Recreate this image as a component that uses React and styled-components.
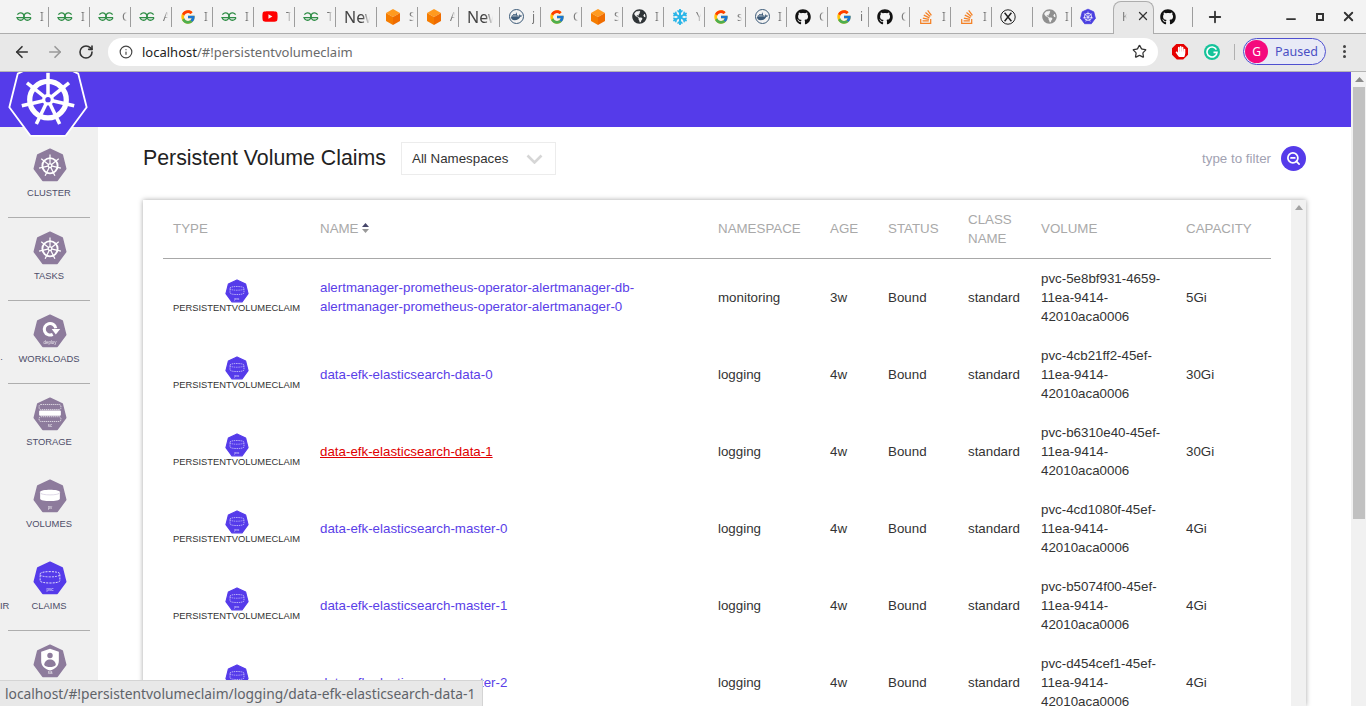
import React from "react";
import styled, { createGlobalStyle } from "styled-components";
import { ArrowLeft, ArrowRight, RotateCw, Info, Star, X, Plus, Minus, ZoomOut } from "lucide-react";
import { FaGithub, FaStackOverflow, FaYoutube, FaDocker, FaSnowflake, FaGlobeAmericas, FaHandPaper } from "react-icons/fa";
import { FcGoogle } from "react-icons/fc";

const PURPLE = "#553bea";
const GREY_HEX = "#8d7b9c";
const HEPTAGON = "50,4 86,21 96,61 71,95 29,95 4,61 14,21";

const GlobalStyle = createGlobalStyle`
  html, body {
    margin: 0;
    height: 100%;
    overflow: hidden;
    background: #fff;
    font-family: "Liberation Sans", Arial, sans-serif;
  }
`;

const Gfg = () => (
  <svg width="16" height="16" viewBox="0 0 16 16" fill="none" stroke="#2f8d46" strokeWidth="1.3">
    <path d="M1.4 5.6A3.7 3.7 0 1 1 1 8.6h14" />
    <path d="M14.6 5.6A3.7 3.7 0 1 0 15 8.6" />
  </svg>
);

const Cube = () => (
  <svg width="16" height="18" viewBox="0 0 16 18">
    <polygon points="8,1 15,5 8,9 1,5" fill="#ff9a1f" />
    <polygon points="1,5 8,9 8,17 1,13" fill="#f57c00" />
    <polygon points="15,5 8,9 8,17 15,13" fill="#ef6c00" />
  </svg>
);

const DockerBadge = () => (
  <DockerRing>
    <FaDocker size={11} color="#3c5a78" />
  </DockerRing>
);

const CrossBadge = () => (
  <svg width="16" height="16" viewBox="0 0 16 16" fill="none" stroke="#222" strokeWidth="1">
    <circle cx="8" cy="8" r="7.2" />
    <path d="M4.6 3.8l6.8 8.4M11.4 3.8l-6.8 8.4" strokeWidth="1.5" />
  </svg>
);

// steering wheel, centred on 50,52 in the heptagon's own box
const Wheel = ({ r = 24, width = 3, hub = PURPLE }) => {
  const spokes = [0, 1, 2, 3, 4, 5, 6].map((i) => (i * 360) / 7);
  return (
    <g stroke="#fff" fill="none">
      <circle cx="50" cy="52" r={r * 0.68} strokeWidth={width * 1.5} />
      {spokes.map((a) => (
        <line key={a} x1="50" y1="52" x2="50" y2={52 - r} strokeWidth={width} transform={`rotate(${a} 50 52)`} />
      ))}
      <circle cx="50" cy="52" r={r * 0.22} fill="#fff" stroke="none" />
      <circle cx="50" cy="52" r={r * 0.1} fill={hub} stroke="none" />
    </g>
  );
};

const K8sIcon = ({ size = 34, color = GREY_HEX }) => (
  <svg width={size} height={size} viewBox="0 0 100 100">
    <polygon points={HEPTAGON} fill={color} stroke={color} strokeWidth="5" strokeLinejoin="round" />
    <Wheel r={33} width={3.6} hub={color} />
  </svg>
);

const Tag = ({ children }) => (
  <text x="50" y="89" textAnchor="middle" fontSize="13" fill="#fff" fontFamily="Liberation Sans, sans-serif" opacity="0.85">
    {children}
  </text>
);

const Drum = ({ dashed }) => (
  <g fill="none" stroke="#fff" strokeWidth={dashed ? 2.4 : 0} strokeDasharray={dashed ? "6 3" : undefined}>
    <path d="M21 38c0-9 58-9 58 0v20c0 9-58 9-58 0z" fill={dashed ? "none" : "#fff"} />
    <path d="M21 40c0 9 58 9 58 0" stroke={dashed ? "#fff" : "#cfc6da"} strokeWidth="2" />
  </g>
);

const VolumeIcon = ({ size = 34, color = GREY_HEX, dashed, tag }) => (
  <svg width={size} height={size} viewBox="0 0 100 100">
    <polygon points={HEPTAGON} fill={color} stroke={color} strokeWidth="5" strokeLinejoin="round" />
    <Drum dashed={dashed} />
    <Tag>{tag}</Tag>
  </svg>
);

const WorkloadIcon = () => (
  <svg width="34" height="34" viewBox="0 0 100 100">
    <polygon points={HEPTAGON} fill={GREY_HEX} stroke={GREY_HEX} strokeWidth="5" strokeLinejoin="round" />
    <path d="M58 60A17 17 0 1 1 67 42" fill="none" stroke="#fff" strokeWidth="9" />
    <polygon points="55,44 80,44 67,60" fill="#fff" />
    <Tag>deploy</Tag>
  </svg>
);

const StorageIcon = () => (
  <svg width="34" height="34" viewBox="0 0 100 100">
    <polygon points={HEPTAGON} fill={GREY_HEX} stroke={GREY_HEX} strokeWidth="5" strokeLinejoin="round" />
    <rect x="18" y="22" width="64" height="15" rx="5" fill="none" stroke="#fff" strokeWidth="2" strokeDasharray="4 2" />
    <rect x="18" y="40" width="64" height="15" rx="3" fill="#fff" />
    <rect x="18" y="58" width="64" height="14" rx="5" fill="none" stroke="#fff" strokeWidth="2" strokeDasharray="4 2" />
    <Tag>sc</Tag>
  </svg>
);

const AccountIcon = () => (
  <svg width="34" height="34" viewBox="0 0 100 100">
    <polygon points={HEPTAGON} fill={GREY_HEX} stroke={GREY_HEX} strokeWidth="5" strokeLinejoin="round" />
    <path d="M50 14l26 9v26c0 16-12 25-26 29-14-4-26-13-26-29V23z" fill="#fff" />
    <circle cx="50" cy="34" r="8" fill={GREY_HEX} />
    <path d="M33 62c0-22 34-22 34 0-6 8-28 8-34 0z" fill={GREY_HEX} />
    <Tag>sa</Tag>
  </svg>
);

const TABS = [
  { icon: <Gfg />, label: "I" },
  { icon: <Gfg />, label: "I" },
  { icon: <Gfg />, label: "G" },
  { icon: <Gfg />, label: "A" },
  { icon: <FcGoogle size={16} />, label: "I" },
  { icon: <Gfg />, label: "I" },
  { icon: <FaYoutube size={17} color="#f00" />, label: "T" },
  { icon: <Gfg />, label: "T" },
  { text: "New" },
  { icon: <Cube />, label: "S" },
  { icon: <Cube />, label: "A" },
  { text: "New" },
  { icon: <DockerBadge />, label: "j" },
  { icon: <FcGoogle size={16} />, label: "G" },
  { icon: <Cube />, label: "S" },
  { icon: <FaGlobeAmericas size={15} color="#2f3437" />, label: "I" },
  { icon: <FaSnowflake size={16} color="#29b5e8" />, label: "Y" },
  { icon: <FcGoogle size={16} />, label: "s" },
  { icon: <DockerBadge />, label: "I" },
  { icon: <FaGithub size={16} color="#111" />, label: "G" },
  { icon: <FcGoogle size={16} />, label: "i" },
  { icon: <FaGithub size={16} color="#111" />, label: "G" },
  { icon: <FaStackOverflow size={16} color="#f48024" />, label: "I" },
  { icon: <FaStackOverflow size={16} color="#f48024" />, label: "I" },
  { icon: <CrossBadge /> },
  { icon: <FaGlobeAmericas size={15} color="#8f8f8f" />, label: "I", narrow: true },
  { icon: <K8sIcon size={17} color="#4a3fe0" />, last: true },
];

const NAV = [
  { label: "CLUSTER", icon: <K8sIcon />, line: true },
  { label: "TASKS", icon: <K8sIcon />, line: true },
  { label: "WORKLOADS", icon: <WorkloadIcon />, line: true, stray: "·" },
  { label: "STORAGE", icon: <StorageIcon />, short: true },
  { label: "VOLUMES", icon: <VolumeIcon tag="pv" />, short: true },
  { label: "CLAIMS", icon: <VolumeIcon tag="pvc" color={PURPLE} dashed />, line: true, stray: "IR" },
  { label: "ACCOUNTS", icon: <AccountIcon /> },
];

const ROWS = [
  { name: "alertmanager-prometheus-operator-alertmanager-db-alertmanager-prometheus-operator-alertmanager-0", ns: "monitoring", age: "3w", volume: "pvc-5e8bf931-4659-11ea-9414-42010aca0006", cap: "5Gi" },
  { name: "data-efk-elasticsearch-data-0", ns: "logging", age: "4w", volume: "pvc-4cb21ff2-45ef-11ea-9414-42010aca0006", cap: "30Gi" },
  { name: "data-efk-elasticsearch-data-1", ns: "logging", age: "4w", volume: "pvc-b6310e40-45ef-11ea-9414-42010aca0006", cap: "30Gi", hover: true },
  { name: "data-efk-elasticsearch-master-0", ns: "logging", age: "4w", volume: "pvc-4cd1080f-45ef-11ea-9414-42010aca0006", cap: "4Gi" },
  { name: "data-efk-elasticsearch-master-1", ns: "logging", age: "4w", volume: "pvc-b5074f00-45ef-11ea-9414-42010aca0006", cap: "4Gi" },
  { name: "data-efk-elasticsearch-master-2", ns: "logging", age: "4w", volume: "pvc-d454cef1-45ef-11ea-9414-42010aca0006", cap: "4Gi" },
];

const App = () => {
  return (
    <Browser>
      <GlobalStyle />
      <TabStrip>
        {TABS.map((t, i) => (
          <Tab key={i} $narrow={t.narrow} $last={t.last}>
            {t.text ? (
              <TabText>{t.text}</TabText>
            ) : (
              <>
                <TabIcon>{t.icon}</TabIcon>
                {t.label && <TabLabel>{t.label}</TabLabel>}
              </>
            )}
          </Tab>
        ))}
        <ActiveTab>
          <TabLabel>K</TabLabel>
          <X size={14} color="#333" strokeWidth={2.2} />
        </ActiveTab>
        <GithubTab>
          <TabIcon>
            <FaGithub size={16} color="#111" />
          </TabIcon>
        </GithubTab>
        <NewTab>
          <Plus size={18} strokeWidth={2.4} color="#333" />
        </NewTab>
        <WindowControls>
          <MinimizeIcon size={14} strokeWidth={3} color="#333" />
          <MaxBox />
          <X size={15} strokeWidth={3} color="#333" />
        </WindowControls>
      </TabStrip>

      <Toolbar>
        <NavButtons>
          <ArrowLeft size={18} strokeWidth={2.2} color="#333" />
          <ArrowRight size={18} strokeWidth={2.2} color="#999" />
          <RotateCw size={16} strokeWidth={2.4} color="#333" />
        </NavButtons>
        <Omnibox>
          <Info size={14} color="#444" strokeWidth={2} />
          <Url>
            localhost<UrlRest>/#!persistentvolumeclaim</UrlRest>
          </Url>
          <Star size={15} color="#333" strokeWidth={2} />
        </Omnibox>
        <AdBlock>
          <FaHandPaper size={11} color="#fff" />
        </AdBlock>
        <Grammarly>
          <svg width="12" height="12" viewBox="0 0 12 12" fill="none" stroke="#fff" strokeWidth="1.6">
            <path d="M10.4 3.6A5 5 0 1 0 11 6.4H7.5" />
          </svg>
        </Grammarly>
        <ToolbarDivider />
        <Profile>
          <Avatar>G</Avatar>
          Paused
        </Profile>
        <Kebab>
          <i />
          <i />
          <i />
        </Kebab>
      </Toolbar>

      <Viewport>
        <Page>
          <Banner>
            <Logo>
              <svg width="84" height="84" viewBox="0 0 100 100">
                <polygon points={HEPTAGON} fill={PURPLE} stroke="#fff" strokeWidth="2.2" strokeLinejoin="round" />
                <Wheel r={32} width={4.2} />
              </svg>
            </Logo>
          </Banner>
          <Content>
            <Sidebar>
              {NAV.map((n) => (
                <NavItem key={n.label} $line={n.line} $short={n.short}>
                  {n.stray && <Stray>{n.stray}</Stray>}
                  {n.icon}
                  <NavLabel>{n.label}</NavLabel>
                </NavItem>
              ))}
            </Sidebar>
            <Main>
              <TitleRow>
                <Title>Persistent Volume Claims</Title>
                <Select>
                  All Namespaces
                  <svg width="17" height="10" viewBox="0 0 17 10" fill="none" stroke="#d6d6d6" strokeWidth="2.6">
                    <path d="M1.5 1.5l7 7 7-7" />
                  </svg>
                </Select>
                <Filter>
                  type to filter
                  <SearchButton>
                    <ZoomOut size={15} color="#fff" strokeWidth={2.8} />
                  </SearchButton>
                </Filter>
              </TitleRow>
              <Card>
                <TableWrap>
                  <Table>
                    <colgroup>
                      <col width="147" />
                      <col width="398" />
                      <col width="112" />
                      <col width="58" />
                      <col width="80" />
                      <col width="73" />
                      <col width="145" />
                      <col width="95" />
                    </colgroup>
                    <thead>
                      <tr>
                        <th><HeadLabel>TYPE</HeadLabel></th>
                        <th>
                          <HeadLabel>
                            NAME
                            <SortCaret width="7" height="10" viewBox="0 0 7 10">
                              <polygon points="3.5,0 7,4 0,4" fill="#45456a" />
                              <polygon points="3.5,10 7,6 0,6" fill="#999" />
                            </SortCaret>
                          </HeadLabel>
                        </th>
                        <th><HeadLabel>NAMESPACE</HeadLabel></th>
                        <th><HeadLabel>AGE</HeadLabel></th>
                        <th><HeadLabel>STATUS</HeadLabel></th>
                        <th>CLASS NAME</th>
                        <th><HeadLabel>VOLUME</HeadLabel></th>
                        <th><HeadLabel>CAPACITY</HeadLabel></th>
                      </tr>
                    </thead>
                    <tbody>
                      {ROWS.map((r) => (
                        <tr key={r.name}>
                          <td>
                            <TypeCell>
                              <VolumeIcon size={24} color={PURPLE} dashed tag="pvc" />
                              <TypeLabel>PERSISTENTVOLUMECLAIM</TypeLabel>
                            </TypeCell>
                          </td>
                          <td>
                            <NameLink $hover={r.hover}>{r.name}</NameLink>
                          </td>
                          <td>{r.ns}</td>
                          <td>{r.age}</td>
                          <td>Bound</td>
                          <td>standard</td>
                          <td>{r.volume}</td>
                          <td>{r.cap}</td>
                        </tr>
                      ))}
                    </tbody>
                  </Table>
                </TableWrap>
                <CardScroll>
                  <svg width="8" height="5" viewBox="0 0 8 5">
                    <polygon points="4,0 8,5 0,5" fill="#a3a3a3" />
                  </svg>
                </CardScroll>
              </Card>
            </Main>
          </Content>
        </Page>
        <PageScroll>
          <svg width="9" height="5" viewBox="0 0 9 5">
            <polygon points="4.5,0 9,5 0,5" fill="#8a8a8a" />
          </svg>
          <PageThumb />
        </PageScroll>
        <StatusBubble>localhost/#!persistentvolumeclaim/logging/data-efk-elasticsearch-data-1</StatusBubble>
      </Viewport>
    </Browser>
  );
};

const Browser = styled.div`
  width: 1366px;
  height: 706px;
  display: flex;
  flex-direction: column;
  overflow: hidden;
`;

const TabStrip = styled.div`
  height: 34px;
  box-sizing: border-box;
  flex: none;
  display: flex;
  align-items: center;
  padding-left: 8px;
  background: #f3f3f3;
  border-bottom: 1px solid #adadad;
`;

const Tab = styled.div`
  width: ${(p) => (p.$narrow ? 39 : 41)}px;
  height: 20px;
  flex: none;
  box-sizing: border-box;
  display: flex;
  align-items: center;
  gap: 8px;
  padding-left: 8px;
  overflow: hidden;
  border-right: ${(p) => (p.$last ? "none" : "1px solid #9d9d9d")};
`;

const GithubTab = styled(Tab)`
  width: 39px;
  padding-left: 6px;
`;

const TabIcon = styled.span`
  width: 16px;
  height: 18px;
  flex: none;
  display: flex;
  align-items: center;
  justify-content: center;
`;

const TabLabel = styled.span`
  font-family: "Noto Sans", sans-serif;
  font-size: 12px;
  color: #777;
  width: 5px;
  overflow: hidden;
  -webkit-mask-image: linear-gradient(to right, #000 30%, transparent);
`;

const TabText = styled.span`
  font-family: "Noto Sans", sans-serif;
  font-size: 16px;
  color: #444;
  width: 26px;
  overflow: hidden;
  -webkit-mask-image: linear-gradient(to right, #000 70%, transparent);
`;

const ActiveTab = styled.div`
  width: 41px;
  height: 33px;
  margin-top: 1px;
  margin-bottom: -1px;
  flex: none;
  box-sizing: border-box;
  display: flex;
  align-items: center;
  gap: 9px;
  padding: 0 0 4px 8px;
  background: #e8e8e8;
  border: 1px solid #adadad;
  border-bottom: none;
  border-radius: 8px 8px 0 0;
`;

const NewTab = styled.div`
  width: 44px;
  flex: none;
  display: flex;
  justify-content: center;
`;

const WindowControls = styled.div`
  margin-left: auto;
  width: 72px;
  margin-right: 10px;
  display: flex;
  align-items: center;
  justify-content: space-between;
`;

const MinimizeIcon = styled(Minus)`
  margin-top: 5px;
`;

const MaxBox = styled.span`
  width: 8px;
  height: 8px;
  box-sizing: border-box;
  border: 2px solid #333;
`;

const Toolbar = styled.div`
  height: 38px;
  flex: none;
  box-sizing: border-box;
  display: flex;
  align-items: center;
  background: #e8e8e8;
  border-bottom: 1px solid #b4b4b4;
  padding-bottom: 2px;
`;

const NavButtons = styled.div`
  width: 108px;
  flex: none;
  box-sizing: border-box;
  padding: 0 14px 0 13px;
  display: flex;
  align-items: center;
  justify-content: space-between;
`;

const Omnibox = styled.div`
  width: 1050px;
  height: 28px;
  flex: none;
  box-sizing: border-box;
  padding: 0 11px;
  display: flex;
  align-items: center;
  gap: 9px;
  background: #fff;
  border-radius: 14px;
`;

const Url = styled.div`
  flex: 1;
  font-family: "Noto Sans", sans-serif;
  font-size: 13px;
  color: #222;
`;

const UrlRest = styled.span`
  color: #6a6a6a;
`;

const AdBlock = styled.div`
  width: 16px;
  height: 16px;
  margin-left: 14px;
  flex: none;
  display: flex;
  align-items: center;
  justify-content: center;
  background: #e60000;
  clip-path: polygon(30% 0, 70% 0, 100% 30%, 100% 70%, 70% 100%, 30% 100%, 0 70%, 0 30%);
`;

const Grammarly = styled.div`
  width: 16px;
  height: 16px;
  margin-left: 16px;
  flex: none;
  border-radius: 50%;
  background: #15c39a;
  display: flex;
  align-items: center;
  justify-content: center;
`;

const ToolbarDivider = styled.div`
  width: 1px;
  height: 16px;
  margin-left: 14px;
  background: #b0b0b0;
`;

const Profile = styled.div`
  width: 83px;
  height: 27px;
  margin-left: 8px;
  flex: none;
  box-sizing: border-box;
  padding-left: 1px;
  display: flex;
  align-items: center;
  gap: 7px;
  font-family: "Noto Sans", sans-serif;
  font-size: 12.5px;
  color: #4a50c4;
  background: #e8eaf6;
  border: 1px solid #4f50d0;
  border-radius: 14px;
`;

const Avatar = styled.span`
  width: 23px;
  height: 23px;
  border-radius: 50%;
  background: #f50a7d;
  color: #fff;
  font-size: 12px;
  display: flex;
  align-items: center;
  justify-content: center;
`;

const Kebab = styled.div`
  margin-left: 17px;
  display: flex;
  flex-direction: column;
  gap: 2px;

  i {
    width: 3px;
    height: 3px;
    border-radius: 50%;
    background: #444;
  }
`;

const Viewport = styled.div`
  position: relative;
  flex: 1;
  min-height: 0;
  display: flex;
`;

const Page = styled.div`
  flex: 1;
  min-width: 0;
  display: flex;
  flex-direction: column;
  overflow: hidden;
`;

const Banner = styled.header`
  position: relative;
  height: 55px;
  flex: none;
  background: ${PURPLE};
`;

const Logo = styled.div`
  position: absolute;
  left: 6px;
  top: -16px;
  z-index: 2;
  line-height: 0;
`;

const Content = styled.div`
  flex: 1;
  min-height: 0;
  display: flex;
`;

const Sidebar = styled.nav`
  width: 98px;
  flex: none;
  box-sizing: border-box;
  padding-top: 8px;
  background: #f0f0f0;
  overflow: hidden;
`;

const NavItem = styled.div`
  position: relative;
  height: ${(p) => (p.$short ? 82 : 83)}px;
  margin: 0 8px;
  box-sizing: border-box;
  padding-top: 13px;
  display: flex;
  flex-direction: column;
  align-items: center;
  border-bottom: 1px solid ${(p) => (p.$line ? "#aeaeae" : "transparent")};

  svg {
    flex: none;
    margin-left: 1px;
  }
`;

const NavLabel = styled.div`
  margin-top: 5px;
  font-size: 9.4px;
  line-height: 11px;
  color: #4d4d68;
`;

const Stray = styled.span`
  position: absolute;
  left: -8px;
  top: 52px;
  font-size: 9.4px;
  line-height: 11px;
  color: #4d4d68;
`;

const Main = styled.main`
  flex: 1;
  min-width: 0;
  display: flex;
  flex-direction: column;
  padding: 0 45px;
`;

const TitleRow = styled.div`
  height: 73px;
  flex: none;
  display: flex;
  align-items: flex-start;
  padding-top: 15px;
  box-sizing: border-box;
`;

const Title = styled.h1`
  margin: 0;
  font-size: 21.33px;
  line-height: 32px;
  font-weight: 400;
  color: #222;
`;

const Select = styled.div`
  width: 155px;
  height: 33px;
  margin-left: 15px;
  box-sizing: border-box;
  padding: 0 12px 0 10px;
  display: flex;
  align-items: center;
  justify-content: space-between;
  font-size: 13.33px;
  color: #333;
  border: 1px solid #ececec;
`;

const Filter = styled.div`
  margin-left: auto;
  height: 33px;
  display: flex;
  align-items: center;
  gap: 10px;
  font-size: 13.33px;
  color: #a2a2b2;
`;

const SearchButton = styled.span`
  width: 25px;
  height: 25px;
  border-radius: 50%;
  background: ${PURPLE};
  display: flex;
  align-items: center;
  justify-content: center;
`;

const Card = styled.section`
  flex: 1;
  min-height: 0;
  display: flex;
  background: #fff;
  box-shadow: 0 0 5px rgba(0, 0, 0, 0.35);
`;

const TableWrap = styled.div`
  flex: 1;
  min-width: 0;
  padding-left: 20px;
  overflow: hidden;
`;

const Table = styled.table`
  width: 1108px;
  table-layout: fixed;
  border-collapse: collapse;
  font-size: 13.33px;
  line-height: 19px;
  color: #333;

  th {
    padding: 10px;
    text-align: left;
    font-weight: 400;
    color: #a9a9a9;
    border-bottom: 1px solid #a8a8a8;
  }

  td {
    padding: 10px;
  }
`;

const HeadLabel = styled.span`
  display: block;
  padding-bottom: 2px;
`;

const SortCaret = styled.svg`
  margin-left: 3px;
  vertical-align: 0;
`;

const TypeCell = styled.div`
  display: flex;
  flex-direction: column;
  align-items: center;
  width: 127px;
  margin-top: -3px;
`;

const TypeLabel = styled.div`
  font-size: 9.4px;
  line-height: 10px;
  color: #333;
  white-space: nowrap;
`;

const NameLink = styled.a`
  display: block;
  padding-bottom: 1px;
  color: ${(p) => (p.$hover ? "#e00000" : "#5a3ee8")};
  text-decoration: ${(p) => (p.$hover ? "underline" : "none")};
`;

const CardScroll = styled.div`
  width: 15px;
  flex: none;
  background: #f1f1f1;
  display: flex;
  justify-content: center;
  padding-top: 5px;
  box-sizing: border-box;

  svg {
    display: block;
  }
`;

const PageScroll = styled.div`
  width: 15px;
  flex: none;
  box-sizing: border-box;
  padding: 5px 1px 0 2px;
  display: flex;
  flex-direction: column;
  align-items: center;
  gap: 5px;
  background: #f1f1f1;
`;

const PageThumb = styled.div`
  width: 100%;
  height: 432px;
  background: #c1c1c1;
`;

const StatusBubble = styled.div`
  position: absolute;
  left: 0;
  bottom: 0;
  width: 483px;
  height: 26px;
  z-index: 3;
  box-sizing: border-box;
  padding-left: 5px;
  display: flex;
  align-items: center;
  font-family: "Noto Sans", sans-serif;
  font-size: 13.8px;
  color: #5f6368;
  white-space: nowrap;
  background: #e8e8e8;
  border-top: 1px solid #d4d4d4;
  border-right: 1px solid #d4d4d4;
`;

const DockerRing = styled.span`
  width: 15px;
  height: 15px;
  box-sizing: border-box;
  border: 1.5px solid #3c5a78;
  border-radius: 50%;
  display: flex;
  align-items: center;
  justify-content: center;
`;

export default App;
